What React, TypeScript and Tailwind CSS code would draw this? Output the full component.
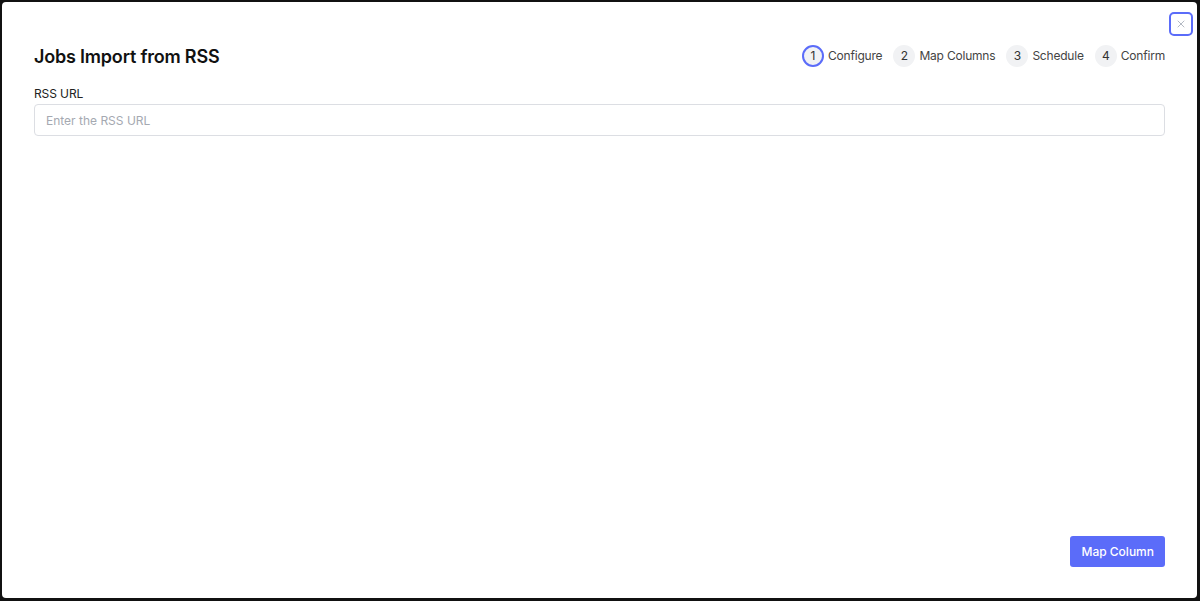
import { X } from "lucide-react";

const steps = [
    { n: 1, label: "Configure" },
    { n: 2, label: "Map Columns" },
    { n: 3, label: "Schedule" },
    { n: 4, label: "Confirm" },
];

const App = () => {
    return (
        <div className="w-[1200px] h-[601px] bg-[#111] p-[2px] pr-[3px] pb-[3px] font-['Inter',sans-serif]">
            <div className="relative w-full h-full bg-white rounded-[4px] flex flex-col px-[32px] pt-[42px] pb-[31px]">
                <button className="absolute top-[10px] right-[4px] w-[24px] h-[24px] border-2 border-[#5b6cf9] rounded-[5px] flex items-center justify-center text-gray-400">
                    <X size={12} strokeWidth={1.5} />
                </button>
                <div className="flex items-center justify-between h-[24px]">
                    <h1 className="text-[18px] font-semibold text-[#111] tracking-[-0.2px]">Jobs Import from RSS</h1>
                    <div className="flex items-center gap-[11px]">
                        {steps.map(s => (
                            <div key={s.n} className="flex items-center gap-[4px]">
                                <span className={`w-[22px] h-[22px] rounded-full bg-[#f1f2f4] flex items-center justify-center text-[12px] text-[#333] ${s.n === 1 ? "border-2 border-[#5b6cf9]" : ""}`}>{s.n}</span>
                                <span className="text-[12px] text-[#444] tracking-[-0.2px]">{s.label}</span>
                            </div>
                        ))}
                    </div>
                </div>
                <label className="mt-[18px] text-[12px] leading-[16px] text-[#222] tracking-[-0.1px]">RSS URL</label>
                <input
                    placeholder="Enter the RSS URL"
                    className="mt-[2px] h-[32px] w-full border border-[#dcdee3] rounded-[4px] px-[11px] text-[12px] placeholder:text-[#a5a9b1] outline-none"
                />
                <div className="flex-1" />
                <div className="flex justify-end">
                    <button className="h-[31px] px-[11px] bg-[#5b6cf9] text-white text-[12px] font-medium rounded-[3px]">Map Column</button>
                </div>
            </div>
        </div>
    );
};

export default App;
